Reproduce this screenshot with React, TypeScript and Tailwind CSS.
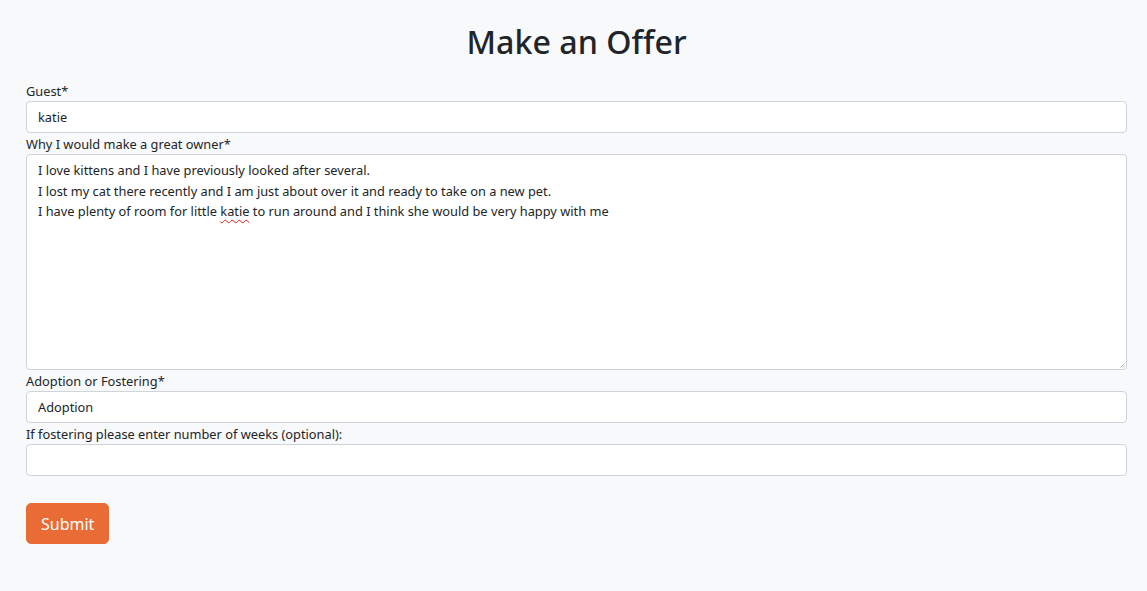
import React from "react";

const font = { fontFamily: '"Noto Sans", "Open Sans", sans-serif' };

export default function App() {
  return (
    <div className="min-h-[591px] w-full bg-[#f8f9fa] text-[#212529]" style={font}>
      <div className="ml-[26px] w-[1101px] pt-[21px]">
        <h1 className="h-[42px] text-center text-[32.2px] font-medium leading-[42px]">Make an Offer</h1>
        <form className="mt-[17px] flex flex-col" onSubmit={(e) => e.preventDefault()}>
          <label className="block h-[21px] text-[12.8px] leading-[22px]">Guest*</label>
          <input
            defaultValue="katie"
            className="block h-[32px] w-full rounded-[4px] border border-[#ced4da] bg-white px-[11px] text-[12.8px] leading-[21px] text-[#212529] outline-none"
          />
          <label className="block h-[21px] text-[12.8px] leading-[22px]">Why I would make a great owner*</label>
          <div className="relative h-[216px] w-full rounded-[4px] border border-[#ced4da] bg-white px-[11px] py-[5px] text-[12.8px] leading-[20.5px]">
            <div>I love kittens and I have previously looked after several.</div>
            <div>I lost my cat there recently and I am just about over it and ready to take on a new pet.</div>
            <div>
              I have plenty of room for little{" "}
              <span className="underline decoration-[#e02020] decoration-wavy decoration-1 underline-offset-[3px]">katie</span>{" "}
              to run around and I think she would be very happy with me
            </div>
            <svg className="absolute bottom-[1px] right-[1px]" width="6" height="6" viewBox="0 0 6 6">
              <path d="M5.5 1.5 L1.5 5.5 M5.5 3.8 L3.8 5.5" stroke="#9aa0a6" strokeWidth="0.8" />
            </svg>
          </div>
          <label className="block h-[21px] text-[12.8px] leading-[22px]">Adoption or Fostering*</label>
          <input
            defaultValue="Adoption"
            className="block h-[32px] w-full rounded-[4px] border border-[#ced4da] bg-white px-[11px] text-[12.8px] leading-[21px] text-[#212529] outline-none"
          />
          <label className="block h-[21px] text-[12.8px] leading-[22px]">If fostering please enter number of weeks (optional):</label>
          <input
            defaultValue=""
            className="block h-[32px] w-full rounded-[4px] border border-[#ced4da] bg-white px-[11px] text-[12.8px] leading-[21px] text-[#212529] outline-none"
          />
          <div className="mt-[27px]">
            <button
              type="submit"
              className="h-[41px] rounded-[5px] border border-[#e96b35] bg-[#e96b35] px-[14px] text-[16px] leading-[26px] text-white"
            >
              Submit
            </button>
          </div>
        </form>
      </div>
    </div>
  );
}
